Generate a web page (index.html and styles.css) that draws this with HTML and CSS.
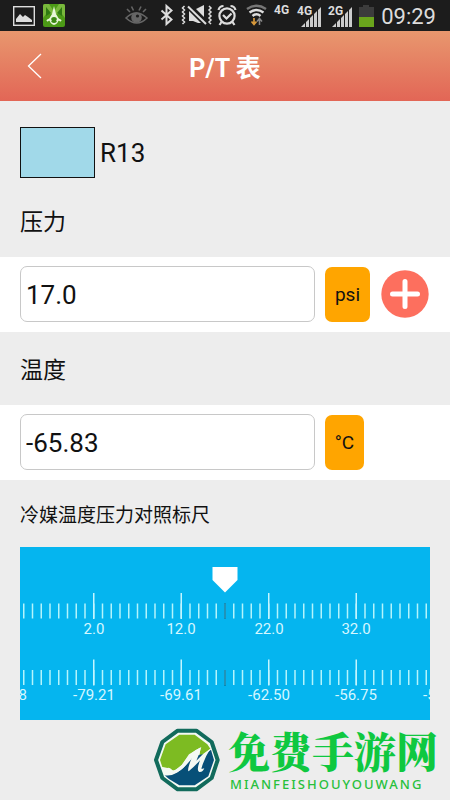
FILE: index.html
```html
<!DOCTYPE html>
<html lang="zh-CN">
<head>
<meta charset="utf-8">
<meta name="viewport" content="width=device-width, initial-scale=1">
<title>P/T 表</title>
<link rel="stylesheet" href="styles.css">
</head>
<body>
<div class="status">
  <svg class="status-icons" width="68" height="31" viewBox="0 0 68 31" aria-hidden="true">
    <rect x="13.7" y="6.7" width="20.6" height="18.6" fill="none" stroke="#ddd" stroke-width="1.4"/>
    <path d="M16 22v-3l4-5 3 3 2-2 3 2 4 3v2z" fill="#ddd"/>
    <rect x="43" y="4" width="22" height="23" rx="2" fill="#4c9a16"/>
    <path d="M43 18V6q0-2 2-2h4l4 6h2l4-6h4q2 0 2 2v12l-4-5-5 1h-4l-5-1z" fill="#79b83c"/>
    <path d="M46 7l5 6-5 3zM62 7l-5 6 5 3z" fill="#2f7a12"/>
    <path d="M54 6l2 8 3 5q-1 5-5 6-4-1-5-6l3-5z" fill="#e8f6d8"/>
    <circle cx="54" cy="20" r="3" fill="#3b8914"/>
    <path d="M47 21q3-3 4 0M57 21q1-3 4 0" fill="none" stroke="#e8f6d8" stroke-width="2"/>
  </svg>
  <svg class="status-icons" width="254" height="31" viewBox="124 0 254 31" aria-hidden="true">
    <g fill="none" stroke="#666" stroke-width="1.6">
      <path d="M126 18q10-10 21 0-10 10-21 0z"/>
      <path d="M127 9l3 3M131.500 6.500l2 4M141 6.500l-2 4M146 9l-3 3"/>
      <circle cx="136.500" cy="17.500" r="4.500" fill="#666"/>
    </g>
    <circle cx="137.500" cy="16" r="1.600" fill="#1c1c1c"/>
    <path d="M161.500 10.500l10 9-5 4.500V6l5 4.500-10 9" fill="none" stroke="#ddd" stroke-width="2"/>
    <g fill="none" stroke="#ddd">
      <path d="M184.500 6l-2 2 2 2-2 2 2 2-2 2 2 2-2 2 2 2-2 2M209 6l2 2-2 2 2 2-2 2 2 2-2 2 2 2-2 2 2 2" stroke-width="1.500"/>
      <path d="M188 6.500l18 17.500" stroke-width="2"/>
    </g>
    <path d="M189 11v10h4l5 2h3zM196 9l8-4v12z" fill="#ddd"/>
    <g fill="none" stroke="#ddd" stroke-width="2.200">
      <circle cx="227" cy="16" r="7.600"/>
      <path d="M223 15l3.500 3.500 5-5"/>
      <path d="M218.500 10q1-4 5-4M235.500 10q-1-4-5-4M221.500 22l-2 3M232.500 22l2 3"/>
    </g>
    <g fill="none" stroke-width="2.400">
      <path d="M247 9q9.500-6.500 19 0" stroke="#777"/>
      <path d="M249.500 12.500q7-5 14 0M252.500 16q4-3.500 8 0" stroke="#ddd"/>
      <path d="M254 18v6m-2.500-2.500l2.500 3 2.500-3" stroke="#d99a3c" stroke-width="1.700"/>
      <path d="M259.500 25v-6m-2.500 2.500l2.500-3 2.500 3" stroke="#888" stroke-width="1.500"/>
    </g>
    <g class="network">
      <text x="274" y="14">4G</text>
      <text x="297" y="15">4G</text>
      <text x="328" y="15">2G</text>
    </g>
    <g fill="#ccc">
      <path d="M301 27l4-4v4zM306 22l3-3v8h-3zM310 18l3-3v12h-3zM314 14l3-3v16h-3zM318 10l3-3v20h-3z"/>
      <path d="M332 27l4-4v4zM337 22l3-3v8h-3zM341 18l3-3v12h-3zM345 14l3-3v16h-3zM349 10l3-3v20h-3z"/>
    </g>
    <path d="M359 7h4V5h6v2h5v10h-15z" fill="#3c3c3c"/>
    <path d="M359 17h15v10h-15z" fill="#6aa51c"/>
  </svg>
  <time class="clock">09:29</time>
</div>

<header class="header">
  <button class="back" type="button" aria-label="返回">
    <svg width="16" height="26" viewBox="0 0 16 26"><path d="M14 1L1.500 13 14 25" fill="none" stroke="#fff" stroke-width="1.300"/></svg>
  </button>
  <h1 class="title">P/T 表</h1>
</header>

<main>
  <section class="refrigerant">
    <span class="swatch"></span>
    <span>R13</span>
  </section>

  <label class="heading heading-first" for="pressure">压力</label>
  <div class="row">
    <input class="field" id="pressure" type="text" value="17.0">
    <button class="unit" type="button">psi</button>
    <button class="add" type="button" aria-label="添加">
      <svg width="48" height="48" viewBox="0 0 48 48">
        <circle cx="24" cy="24" r="23.700" fill="#fd6f5e"/>
        <path d="M24 11.500v25M11.500 24h25" stroke="#fff" stroke-width="5" stroke-linecap="round"/>
      </svg>
    </button>
  </div>

  <label class="heading" for="temperature">温度</label>
  <div class="row">
    <input class="field" id="temperature" type="text" value="-65.83">
    <button class="unit unit-narrow" type="button">°C</button>
  </div>

  <h2 class="caption">冷媒温度压力对照标尺</h2>
  <div class="ruler">
    <svg class="scale" width="440" height="173" viewBox="-220 0 440 173">
      <path d="M-12.500 20h25v13L0 45.500-12.500 33z" fill="#fff"/>
      <g fill="none" stroke="#b4f4fc">
        <path d="M-210.750 64H210M-210.750 130.500H210" stroke-width="15" stroke-dasharray="1.500 7.250"/>
        <path d="M-131.250 46v26M-43.750 46v26M43.750 46v26M131.250 46v26M-131.250 112.500v26M-43.750 112.500v26M43.750 112.500v26M131.250 112.500v26" stroke="#c4f5ff" stroke-width="1.500"/>
        <path d="M0 56v16M0 123v16" stroke="#087fa8" stroke-width="1.600"/>
      </g>
      <g class="scale-labels">
        <text x="-131" y="87">2.0</text>
        <text x="-44" y="87">12.0</text>
        <text x="44" y="87">22.0</text>
        <text x="131" y="87">32.0</text>
        <text x="-219" y="153">-91.38</text>
        <text x="-131" y="153">-79.21</text>
        <text x="-44" y="153">-69.61</text>
        <text x="44" y="153">-62.50</text>
        <text x="131" y="153">-56.75</text>
        <text x="219" y="153">-51.85</text>
      </g>
    </svg>
  </div>
</main>

<footer class="brand">
  <svg width="68" height="68" viewBox="42 51 204 204" aria-hidden="true">
    <path d="M236 153L218 99 172 65H116L70 99 51 153 70 207 116 241H172L218 207z" fill="#f4f9f3" stroke="#126b5c" stroke-width="12" stroke-linejoin="round"/>
    <path d="M214 119L205 106 167 77H121L80 106 63 153 70 174 90 178 105 186 128 168 150 136 185 115 180 148z" fill="#7dbb22"/>
    <path d="M77 199Q116 197 138 172L166 140 200 134 216 122 225 153 208 202 167 229H121L90 210z" fill="#075078"/>
    <path d="M67 173q10 6 22 3 8 2 11 9 21-4 37-28 20-30 50-42-5 18-15 40 20-23 42-36-18 28-27 60 4 2 9-3-4 14-15 13-10-4 2-35-18 20-34 33-6-3 10-42-20 30-43 45-18 12-39 9z" fill="#f4f9f3"/>
  </svg>
  <div class="brand-text">
    <div class="brand-name">免费手游网</div>
    <div class="brand-latin">MIANFEISHOUYOUWANG</div>
  </div>
</footer>
</body>
</html>
```
FILE: styles.css
```css
* {
  box-sizing: border-box;
}

body {
  margin: 0;
  background: #ededed;
  color: #111;
  font-family: Roboto, "Noto Sans CJK SC", sans-serif;
  font-size: 26px;
}

button {
  border: 0;
  padding: 0;
  background: none;
  color: inherit;
  font: inherit;
}

svg {
  display: block;
}

.status {
  display: flex;
  align-items: center;
  height: 31px;
  padding-right: 14px;
  background: #1c1c1c;
  color: #ddd;
}

.status-icons + .status-icons {
  margin-left: auto;
}

.network {
  fill: #ddd;
  font-size: 12px;
  font-weight: 700;
}

.clock {
  width: 58px;
  padding-top: 2px;
  text-align: right;
  font-size: 22px;
  line-height: 31px;
}

.header {
  display: grid;
  grid-template-columns: 56px 1fr 56px;
  align-items: center;
  height: 70px;
  background: linear-gradient(#e8976e, #e26656);
  color: #fff;
}

.back {
  display: flex;
  justify-content: center;
  padding-left: 14px;
}

.title {
  margin: 0;
  text-align: center;
  font-size: 25px;
  font-weight: 700;
}

.refrigerant {
  display: flex;
  align-items: center;
  gap: 5px;
  padding: 26px 20px 0;
}

.swatch {
  width: 75px;
  height: 51px;
  border: 1px solid #111;
  background: #a1d9e9;
}

.heading {
  display: block;
  padding: 4px 20px 0;
  font-size: 23px;
  line-height: 69px;
}

.heading-first {
  padding-top: 10px;
}

.row {
  display: grid;
  grid-template-columns: 1fr 45px 50px;
  gap: 10px;
  align-items: center;
  padding: 9px 20px 10px;
  background: #fff;
}

.field {
  width: 100%;
  min-width: 0;
  height: 56px;
  padding: 2px 5px 0;
  border: 1px solid #c8c8c8;
  border-radius: 7px;
  background: #fff;
  color: #111;
  font: inherit;
}

.unit {
  height: 55px;
  border-radius: 7px;
  background: #ffa500;
  font-size: 19px;
}

.unit-narrow {
  width: 39px;
}

.add {
  display: flex;
  justify-content: center;
}

.caption {
  margin: 0;
  padding: 4px 20px 0;
  font-size: 19px;
  font-weight: 400;
  line-height: 63px;
}

.ruler {
  display: flex;
  justify-content: center;
  margin: 0 20px;
  overflow: hidden;
  background: #05b5ef;
}

.scale {
  flex: none;
}

.scale-labels {
  fill: #d5f7ff;
  font-size: 15px;
  text-anchor: middle;
}

.brand {
  display: flex;
  justify-content: flex-end;
  align-items: center;
  gap: 7px;
  padding: 6px 12px 6px 0;
}

.brand-name {
  color: #0fc840;
  font-family: "Noto Serif CJK SC", "Noto Sans CJK SC", serif;
  font-size: 42px;
  font-weight: 900;
  line-height: 46px;
}

.brand-latin {
  padding: 2px 0 0 2px;
  color: #28c03c;
  font-family: "Noto Sans", sans-serif;
  font-size: 13px;
  font-weight: 500;
  letter-spacing: 2px;
  line-height: 18px;
}
```
